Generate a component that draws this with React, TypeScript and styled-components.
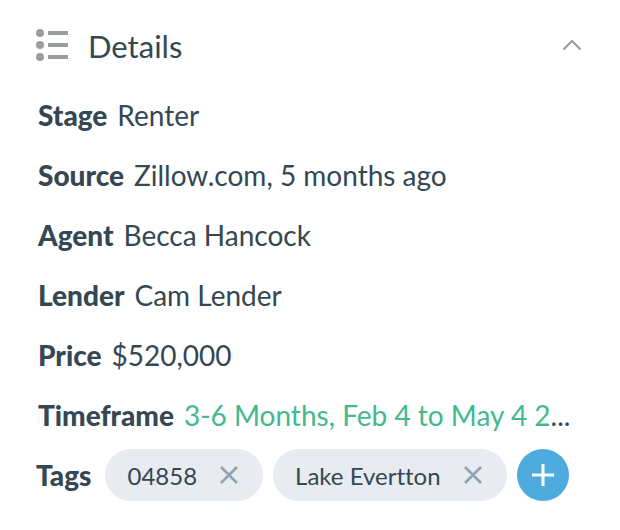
import React from "react";
import styled, { createGlobalStyle } from "styled-components";

const GlobalStyle = createGlobalStyle`
  * { box-sizing: border-box; }
  body {
    margin: 0;
    background: #ffffff;
    color: #344753;
    font-family: Lato, "Liberation Sans", sans-serif;
    font-variant-ligatures: none;
  }
  button { font: inherit; color: inherit; border: 0; padding: 0; background: none; cursor: pointer; }
  svg { display: block; }
`;

const Panel = styled.section`
  padding: 16px 36px 28px;
`;

const Header = styled.header`
  display: flex;
  align-items: center;
  height: 58px;
  gap: 19px;
`;

const Title = styled.h2`
  flex: 1;
  margin: 0;
  padding-top: 2px;
  font-size: 31px;
  line-height: 40px;
  font-weight: 400;
`;

const Toggle = styled.button`
  display: grid;
  place-items: center;
  width: 20px;
  height: 20px;
  margin-right: 2px;
`;

const Fields = styled.dl`
  margin: 11px 0 0;
`;

const Field = styled.div`
  display: flex;
  align-items: baseline;
  gap: 10px;
  height: 60px;
  padding: 0 2px;
  line-height: 60px;
  white-space: nowrap;
`;

const Label = styled.dt`
  font-size: 28px;
  font-weight: 900;
`;

const Value = styled.dd`
  margin: 0;
  min-width: 0;
  font-size: 28px;
`;

const TimeframeLink = styled.a`
  color: #43b98c;
  text-decoration: none;
`;

const TagRow = styled.div`
  display: flex;
  align-items: center;
  gap: 10px;
  margin-top: 4px;
`;

const TagTitle = styled.h3`
  margin: 0 4px 0 0;
  font-size: 28px;
  line-height: 52px;
  font-weight: 900;
`;

const TagList = styled.ul`
  display: flex;
  gap: 10px;
  margin: 0;
  padding: 0;
  list-style: none;
`;

const Tag = styled.li`
  display: flex;
  align-items: center;
  gap: 23px;
  height: 52px;
  padding: 0 25px 0 22px;
  border-radius: 26px;
  background: #e8ebf0;
  font-size: 24px;
  white-space: nowrap;
`;

const AddButton = styled.button`
  display: grid;
  place-items: center;
  flex: none;
  width: 52px;
  height: 52px;
  border-radius: 50%;
  && { background: #4dabde; }
`;

const fields = [
  ["Stage", "Renter"],
  ["Source", "Zillow.com, 5 months ago"],
  ["Agent", "Becca Hancock"],
  ["Lender", "Cam Lender"],
  ["Price", "$520,000"],
];

const ListIcon = () => (
  <svg width="33" height="34" viewBox="0 0 33 34" fill="#9a9da0" aria-hidden="true">
    {[5, 17, 29].map((y) => (
      <g key={y}>
        <circle cx="4" cy={y} r="4" />
        <rect x="12" y={y - 2} width="20" height="4" />
      </g>
    ))}
  </svg>
);

const CloseIcon = () => (
  <svg width="18" height="18" viewBox="0 0 18 18" fill="none" stroke="#8fa3b3" strokeWidth="2.6" aria-hidden="true">
    <path d="M1 1 17 17M17 1 1 17" />
  </svg>
);

export default function App() {
  return (
    <>
      <GlobalStyle />
      <Panel>
        <Header>
          <ListIcon />
          <Title>Details</Title>
          <Toggle type="button" aria-label="Collapse details" aria-expanded="true">
            <svg width="20" height="12" viewBox="0 0 20 12" fill="none" stroke="#96999c" strokeWidth="2" aria-hidden="true">
              <path d="M1.5 10.5 10 2 18.5 10.5" />
            </svg>
          </Toggle>
        </Header>
        <Fields>
          {fields.map(([label, value]) => (
            <Field key={label}>
              <Label>{label}</Label>
              <Value>{value}</Value>
            </Field>
          ))}
          <Field>
            <Label>Timeframe</Label>
            <Value>
              <TimeframeLink href="#timeframe">3-6 Months, Feb 4 to May 4 2</TimeframeLink>...
            </Value>
          </Field>
        </Fields>
        <TagRow>
          <TagTitle>Tags</TagTitle>
          <TagList>
            {["04858", "Lake Evertton"].map((tag) => (
              <Tag key={tag}>
                {tag}
                <button type="button" aria-label={`Remove ${tag}`}>
                  <CloseIcon />
                </button>
              </Tag>
            ))}
          </TagList>
          <AddButton type="button" aria-label="Add tag">
            <svg width="22" height="22" viewBox="0 0 22 22" fill="none" stroke="#ffffff" strokeWidth="3" aria-hidden="true">
              <path d="M11 0V22M0 11H22" />
            </svg>
          </AddButton>
        </TagRow>
      </Panel>
    </>
  );
}
